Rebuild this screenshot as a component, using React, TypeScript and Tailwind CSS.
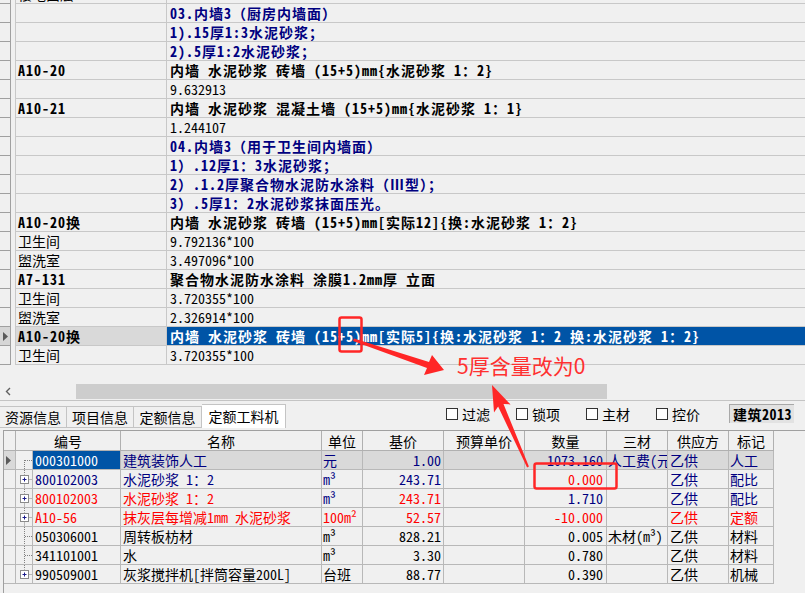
import React from 'react';

const MONO = "font-['Noto_Sans_Mono_CJK_SC','Noto_Sans_CJK_SC',sans-serif]";
const SANS = "font-['Noto_Sans_CJK_SC','Noto_Sans',sans-serif]";

type TopRow = { code?: string; codeBold?: boolean; name?: string; kind?: 'blue' | 'bold' | 'plain' | 'sel' };

const topRows: TopRow[] = [
  { code: '楼地面层', kind: 'plain' },
  { name: '03.内墙3（厨房内墙面）', kind: 'blue' },
  { name: '1).15厚1:3水泥砂浆；', kind: 'blue' },
  { name: '2).5厚1:2水泥砂浆；', kind: 'blue' },
  { code: 'A10-20', codeBold: true, name: '内墙 水泥砂浆 砖墙 (15+5)mm{水泥砂浆 1：2}', kind: 'bold' },
  { name: '9.632913', kind: 'plain' },
  { code: 'A10-21', codeBold: true, name: '内墙 水泥砂浆 混凝土墙 (15+5)mm{水泥砂浆 1：1}', kind: 'bold' },
  { name: '1.244107', kind: 'plain' },
  { name: '04.内墙3（用于卫生间内墙面）', kind: 'blue' },
  { name: '1）.12厚1：3水泥砂浆；', kind: 'blue' },
  { name: '2）.1.2厚聚合物水泥防水涂料（Ⅲ型）；', kind: 'blue' },
  { name: '3）.5厚1：2水泥砂浆抹面压光。', kind: 'blue' },
  { code: 'A10-20换', codeBold: true, name: '内墙 水泥砂浆 砖墙 (15+5)mm[实际12]{换:水泥砂浆 1：2}', kind: 'bold' },
  { code: '卫生间', name: '9.792136*100', kind: 'plain' },
  { code: '盥洗室', name: '3.497096*100', kind: 'plain' },
  { code: 'A7-131', codeBold: true, name: '聚合物水泥防水涂料 涂膜1.2mm厚 立面', kind: 'bold' },
  { code: '卫生间', name: '3.720355*100', kind: 'plain' },
  { code: '盥洗室', name: '2.326914*100', kind: 'plain' },
  { code: 'A10-20换', codeBold: true, name: '内墙 水泥砂浆 砖墙 (15+5)mm[实际5]{换:水泥砂浆 1：2 换:水泥砂浆 1：2}', kind: 'sel' },
  { code: '卫生间', name: '3.720355*100', kind: 'plain' },
];

function Tri() {
  return (
    <svg width="5" height="9" viewBox="0 0 5 9">
      <polygon points="0,0 5,4.5 0,9" fill="#5a5a5a" />
    </svg>
  );
}

function TopGrid() {
  return (
    <div className={`h-[365px] overflow-hidden text-[14px] ${MONO}`}>
      <div className="mt-[-15px]">
        {topRows.map((r, i) => {
          const sel = r.kind === 'sel';
          let nameCls = 'text-black';
          if (r.kind === 'blue') nameCls = 'text-[#000080] font-bold tracking-[1px]';
          if (r.kind === 'bold') nameCls = 'text-black font-bold tracking-[1px]';
          if (sel) nameCls = 'text-white font-bold tracking-[1px] bg-[#0054a6]';
          const codeCls = r.codeBold ? 'font-bold tracking-[1px] text-black' : 'text-black';
          return (
            <div key={i} className="flex h-[19px]">
              <div className={`w-[11px] shrink-0 border-r border-b border-[#a0a0a0] flex items-center pl-[3px] ${sel ? 'bg-[#d6d6d6]' : ''}`}>
                {sel && <Tri />}
              </div>
              <div className="w-[5px] shrink-0 border-r border-[#c8c8c8]" />
              <div className={`w-[151px] shrink-0 border-r border-b border-[#c8c8c8] pl-[2px] leading-[18px] whitespace-nowrap overflow-hidden ${codeCls} ${sel ? 'bg-[#d9d9d9]' : ''}`}>
                {r.code}
              </div>
              <div className={`flex-1 border-b border-[#c8c8c8] pl-[3px] leading-[18px] whitespace-nowrap overflow-hidden ${nameCls}`}>
                {r.name}
              </div>
            </div>
          );
        })}
      </div>
    </div>
  );
}

function ScrollBar() {
  return (
    <div className="flex h-[17px] items-center bg-[#f0f0f0]">
      <div className="w-[17px] h-full flex items-center justify-center">
        <svg width="7" height="9" viewBox="0 0 7 9">
          <polyline points="5,1 1.5,4.5 5,8" fill="none" stroke="#606060" strokeWidth="1.4" />
        </svg>
      </div>
      <div className="w-[59px]" />
      <div className="w-[531px] h-[15px] bg-[#cdcdcd]" />
    </div>
  );
}

function Tabs() {
  const tabs = [
    { t: '资源信息', w: 'w-[67px]' },
    { t: '项目信息', w: 'w-[67px]' },
    { t: '定额信息', w: 'w-[68px]' },
  ];
  const checks = ['过滤', '锁项', '主材', '控价'];
  return (
    <div className={`flex h-[29px] text-[14px] ${SANS}`}>
      <div className="flex items-end h-[27px]">
        {tabs.map((t) => (
          <div key={t.t} className={`${t.w} h-[22px] border-t border-r border-b border-[#c4c4c4] bg-[#f0f0f0] flex items-center justify-center text-black leading-none whitespace-nowrap`}>
            {t.t}
          </div>
        ))}
        <div className="w-[84px] h-[24px] border-t border-r border-[#c4c4c4] bg-white flex items-center justify-center text-black leading-none pb-[2px] whitespace-nowrap">
          定额工料机
        </div>
      </div>
      <div className="flex ml-[160px] mt-[6px] h-[14px]">
        {checks.map((c) => (
          <div key={c} className="w-[70px] flex items-center gap-[4px] text-black leading-none whitespace-nowrap">
            <div className="w-[12px] h-[12px] border border-[#333] bg-white shrink-0" />
            <span>{c}</span>
          </div>
        ))}
      </div>
      <div className={`ml-[3px] mt-[3px] h-[19px] w-[65px] shrink-0 bg-[#e2e2e2] border-l border-t border-[#a8a8a8] pl-[3px] flex items-center font-bold text-black leading-none whitespace-nowrap tracking-[0.5px] ${MONO}`}>
        建筑2013
      </div>
    </div>
  );
}

const N = 'text-[#000080]';
const R = 'text-[#ff0000]';
const K = 'text-black';

type BRow = {
  tree: 'first' | 'plus' | 'line' | 'lastplus';
  sel?: boolean;
  code: [string, string];
  name: [string, string];
  unit: [string, string];
  price: [string, string];
  qty: [string, string];
  mat: [string, string];
  sup: [string, string];
  tag: [string, string];
};

const bRows: BRow[] = [
  { tree: 'first', sel: true, code: ['000301000', 'text-white'], name: ['建筑装饰人工', N], unit: ['元', N], price: ['1.00', N], qty: ['1073.160', N], mat: ['人工费(元', N], sup: ['乙供', N], tag: ['人工', N] },
  { tree: 'plus', code: ['800102003', N], name: ['水泥砂浆 1：2', N], unit: ['m³', N], price: ['243.71', N], qty: ['0.000', R], mat: ['', N], sup: ['乙供', N], tag: ['配比', N] },
  { tree: 'plus', code: ['800102003', R], name: ['水泥砂浆 1：2', R], unit: ['m³', N], price: ['243.71', R], qty: ['1.710', N], mat: ['', N], sup: ['乙供', N], tag: ['配比', N] },
  { tree: 'plus', code: ['A10-56', R], name: ['抹灰层每增减1mm 水泥砂浆', R], unit: ['100m²', R], price: ['52.57', R], qty: ['-10.000', R], mat: ['', R], sup: ['乙供', R], tag: ['定额', R] },
  { tree: 'line', code: ['050306001', K], name: ['周转板枋材', K], unit: ['m³', K], price: ['828.21', K], qty: ['0.005', K], mat: ['木材(m³)', K], sup: ['乙供', K], tag: ['材料', K] },
  { tree: 'line', code: ['341101001', K], name: ['水', K], unit: ['m³', K], price: ['3.30', K], qty: ['0.780', K], mat: ['', K], sup: ['乙供', K], tag: ['材料', K] },
  { tree: 'lastplus', code: ['990509001', K], name: ['灰浆搅拌机[拌筒容量200L]', K], unit: ['台班', K], price: ['88.77', K], qty: ['0.390', K], mat: ['', K], sup: ['乙供', K], tag: ['机械', K] },
];

function TreeIcon({ kind }: { kind: BRow['tree'] }) {
  const dot = { stroke: '#808080', strokeWidth: 1, strokeDasharray: '1 1' } as const;
  const hasPlus = kind === 'plus' || kind === 'lastplus';
  const vTop = kind === 'first' ? 9 : 0;
  const vBot = kind === 'lastplus' ? 9 : 18;
  return (
    <svg width="16" height="18" viewBox="0 0 16 18">
      <line x1="8.5" y1={vTop} x2="8.5" y2={hasPlus ? 4.5 : vBot} {...dot} />
      {hasPlus && vBot > 13 && <line x1="8.5" y1="13.5" x2="8.5" y2={vBot} {...dot} />}
      {hasPlus ? (
        <>
          <rect x="4.5" y="5.5" width="8" height="8" fill="#ffffff" stroke="#8a8a8a" />
          <line x1="6.5" y1="9.5" x2="10.5" y2="9.5" stroke="#1a1a8a" />
          <line x1="8.5" y1="7.5" x2="8.5" y2="11.5" stroke="#1a1a8a" />
          <line x1="12.5" y1="9.5" x2="16" y2="9.5" {...dot} />
        </>
      ) : (
        <line x1="9" y1="9.5" x2="16" y2="9.5" {...dot} />
      )}
    </svg>
  );
}

function BottomGrid() {
  const hcell = 'shrink-0 border-r border-b border-[#b0b0b0] flex items-center justify-center leading-none text-black';
  const bc = 'shrink-0 border-r border-b border-[#b8b8b8] leading-[18px] whitespace-nowrap overflow-hidden';
  return (
    <div className="flex-1 ml-[3px] border-l border-t border-[#a0a0a0] overflow-hidden">
      <div className={`flex h-[20px] w-[770px] text-[14px] ${SANS}`}>
        <div className={`${hcell} w-[12px]`} />
        <div className={`${hcell} w-[105px]`}>编号</div>
        <div className={`${hcell} w-[201px]`}>名称</div>
        <div className={`${hcell} w-[41px]`}>单位</div>
        <div className={`${hcell} w-[81px]`}>基价</div>
        <div className={`${hcell} w-[81px]`}>预算单价</div>
        <div className={`${hcell} w-[82px]`}>数量</div>
        <div className={`${hcell} w-[61px]`}>三材</div>
        <div className={`${hcell} w-[61px]`}>供应方</div>
        <div className={`${hcell} w-[45px]`}>标记</div>
      </div>
      {bRows.map((r, i) => {
        const g = r.sel ? 'bg-[#d9d9d9]' : '';
        return (
          <div key={i} className={`flex h-[19px] w-[770px] text-[14px] ${MONO}`}>
            <div className={`${bc} w-[12px] flex items-center pl-[2px] ${g}`}>{r.sel && <Tri />}</div>
            <div className={`${bc} w-[17px] flex items-start`}>
              <TreeIcon kind={r.tree} />
            </div>
            <div className={`${bc} w-[88px] pl-[2px] ${r.code[1]} ${r.sel ? 'bg-[#0054a6]' : ''}`}>{r.code[0]}</div>
            <div className={`${bc} w-[201px] pl-[2px] ${r.name[1]} ${g}`}>{r.name[0]}</div>
            <div className={`${bc} w-[41px] pl-[1px] ${r.unit[1]} ${g}`}>{r.unit[0]}</div>
            <div className={`${bc} w-[81px] pr-[2px] text-right ${r.price[1]} ${g}`}>{r.price[0]}</div>
            <div className={`${bc} w-[81px] ${g}`} />
            <div className={`${bc} w-[82px] pr-[3px] text-right ${r.qty[1]} ${g}`}>{r.qty[0]}</div>
            <div className={`${bc} w-[61px] pl-[1px] ${r.mat[1]} ${g}`}>{r.mat[0]}</div>
            <div className={`${bc} w-[61px] pl-[2px] ${r.sup[1]} ${g}`}>{r.sup[0]}</div>
            <div className={`${bc} w-[45px] pl-[1px] ${r.tag[1]} ${g}`}>{r.tag[0]}</div>
          </div>
        );
      })}
    </div>
  );
}

function Annotation() {
  const red = '#ff2626';
  return (
    <>
      <svg className="absolute left-0 top-0 pointer-events-none" width="805" height="593" viewBox="0 0 805 593">
        <rect x="339.5" y="317.5" width="22" height="34" rx="2" fill="none" stroke={red} strokeWidth="2.5" />
        <rect x="534.5" y="463.5" width="82" height="25" rx="2" fill="none" stroke={red} strokeWidth="2.5" />
        <polygon points="354,338.5 429,362 432,355 444,370 424,375 427,368 353,341" fill={red} />
        <polygon points="528.9,466.6 503.5,404 510.5,404.4 492,385 494,412.4 498.1,406.4 527.1,467.4" fill={red} />
      </svg>
      <div className={`absolute left-[457px] top-[355px] text-[21px] leading-none text-[#ff3030] whitespace-nowrap ${SANS}`}>
        5厚含量改为0
      </div>
    </>
  );
}

export default function App() {
  return (
    <div className="relative w-[805px] h-[593px] overflow-hidden bg-[#f0f0f0] flex flex-col">
      <TopGrid />
      <div className="h-[18px] shrink-0" />
      <ScrollBar />
      <div className="h-px bg-[#c4c4c4] shrink-0" />
      <Tabs />
      <BottomGrid />
      <Annotation />
    </div>
  );
}
